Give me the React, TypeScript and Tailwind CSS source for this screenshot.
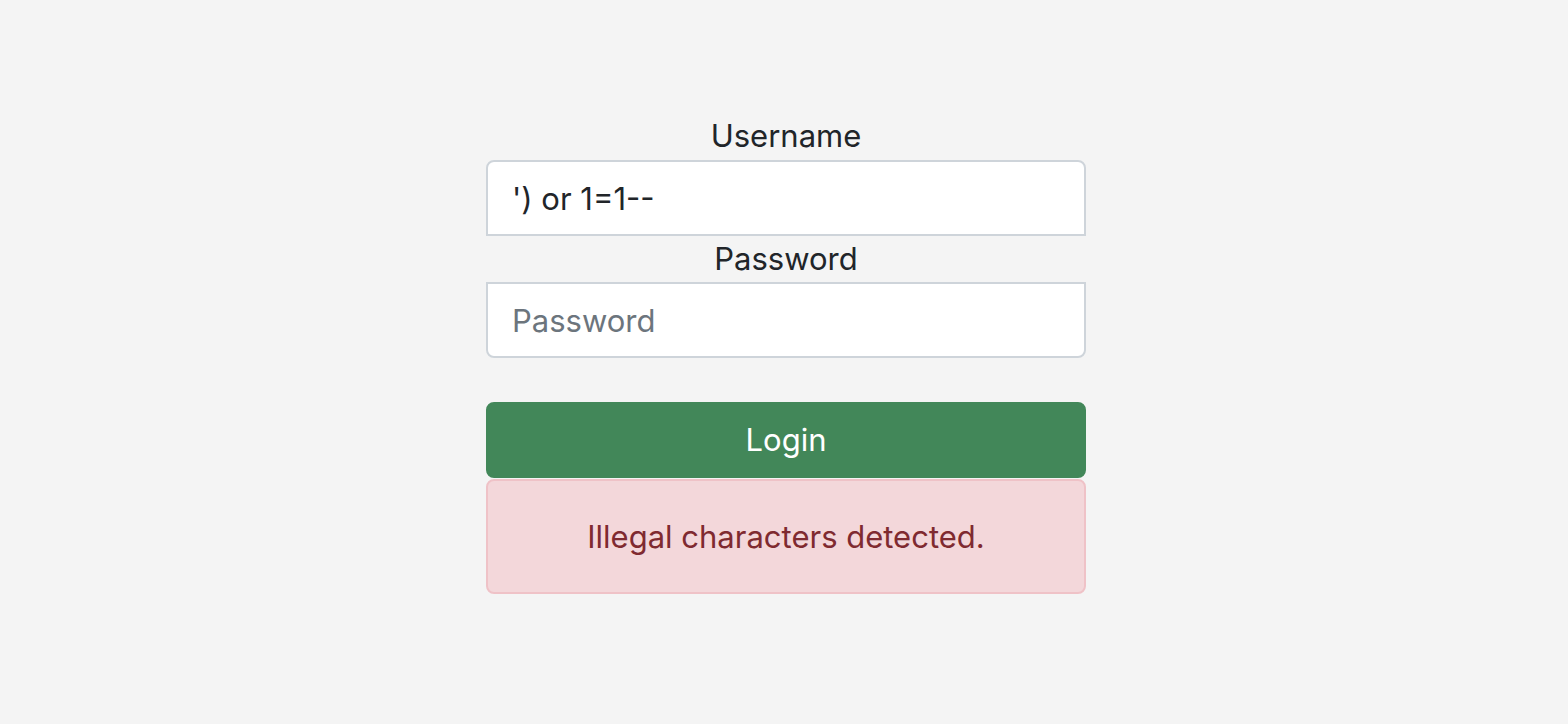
export default function App() {
  return (
    <div className="min-h-[724px] bg-[#f4f4f4] pl-[4px] pt-[112px] font-['Inter','Liberation_Sans',sans-serif] text-[#212529]">
      <form className="mx-auto flex w-[600px] flex-col" onSubmit={(e) => e.preventDefault()}>
        <label className="block text-center text-[31px] leading-[48px]">Username</label>
        <input
          type="text"
          defaultValue="') or 1=1--"
          className="h-[76px] w-full rounded-t-[8px] border-2 border-[#ced4da] bg-white px-[24px] text-[31px] text-[#212529] outline-none"
        />
        <label className="block text-center text-[31px] leading-[46px]">Password</label>
        <input
          type="password"
          placeholder="Password"
          className="h-[76px] w-full rounded-b-[8px] border-2 border-[#ced4da] bg-white px-[24px] text-[31px] outline-none placeholder:text-[#6c757d]"
        />
        <button
          type="submit"
          className="mt-[44px] h-[76px] w-full rounded-[8px] border-2 border-[#428759] bg-[#428759] text-[31px] text-white"
        >
          Login
        </button>
        <div className="mt-px rounded-[8px] border-2 border-[#efc2c7] bg-[#f3d7da] py-[32px] text-center text-[31px] leading-[47px] text-[#7f2a30]">
          Illegal characters detected.
        </div>
      </form>
    </div>
  )
}
